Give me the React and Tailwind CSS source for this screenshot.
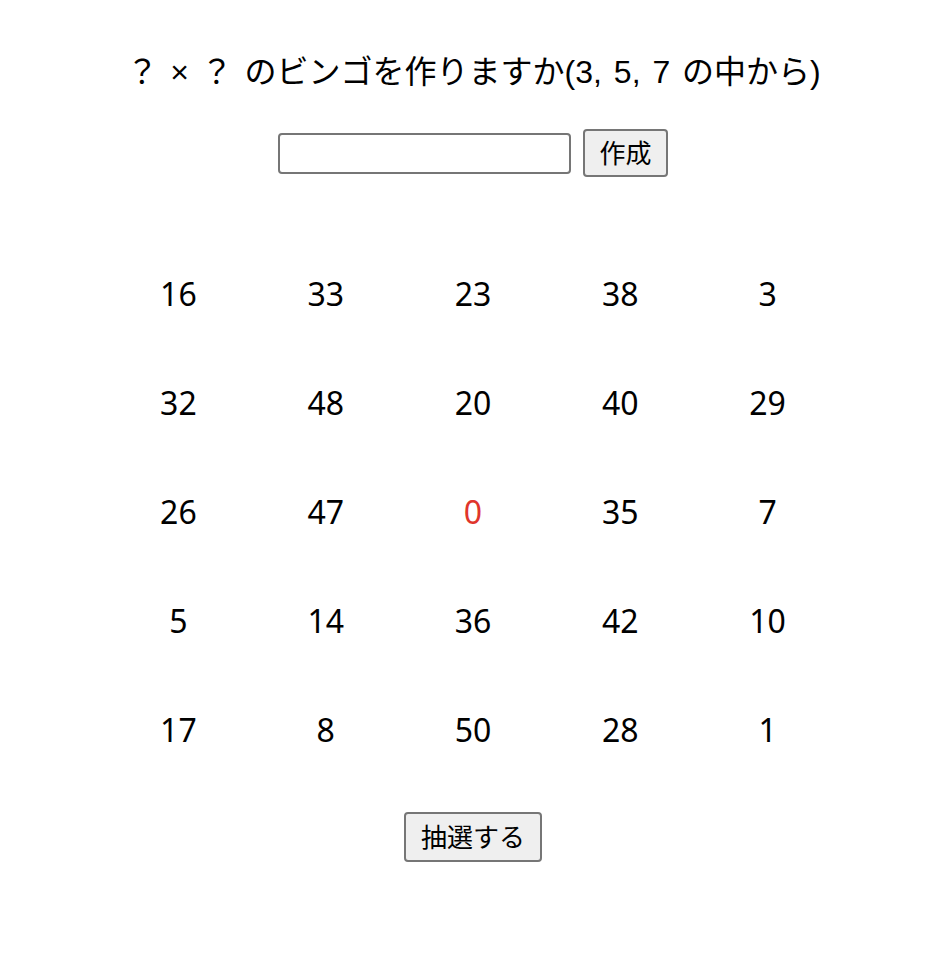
const board = [
  [16, 33, 23, 38, 3],
  [32, 48, 20, 40, 29],
  [26, 47, 0, 35, 7],
  [5, 14, 36, 42, 10],
  [17, 8, 50, 28, 1],
];

const font = { fontFamily: '"Noto Sans", "Noto Sans CJK JP", sans-serif' };
const headFont = { fontFamily: '"Liberation Sans", "Noto Sans CJK JP", sans-serif' };

export default function App() {
  return (
    <div className="flex min-h-[955px] flex-col items-center bg-white text-black" style={font}>
      <p
        className="mt-[52px] ml-[-3px] h-[40px] whitespace-nowrap text-[32px] leading-[40px] [word-spacing:3px]"
        style={headFont}
      >
        ？ × ？ のビンゴを作りますか(3, 5, 7 の中から)
      </p>

      <div className="mt-[37px] mr-[4px] flex items-center gap-[12px]">
        <input
          type="text"
          className="h-[41px] w-[293px] rounded-[4px] border-2 border-[#767676] bg-white px-2 outline-none"
        />
        <button
          type="button"
          className="h-[48px] rounded-[4px] border-2 border-[#767676] bg-[#efefef] px-[14px] text-[26px] leading-none"
        >
          作成
        </button>
      </div>

      <div className="mt-[62px] mr-[4px] grid grid-cols-[repeat(5,147.3px)]">
        {board.flat().map((n, i) => (
          <div
            key={i}
            className={`flex h-[109px] items-center justify-center text-[32px] ${n === 0 ? 'text-[#e0352b]' : ''}`}
          >
            {n}
          </div>
        ))}
      </div>

      <button
        type="button"
        className="mt-[28px] mr-[4px] h-[50px] rounded-[4px] border-2 border-[#767676] bg-[#efefef] px-[15px] text-[26px] leading-none"
      >
        抽選する
      </button>
    </div>
  );
}
